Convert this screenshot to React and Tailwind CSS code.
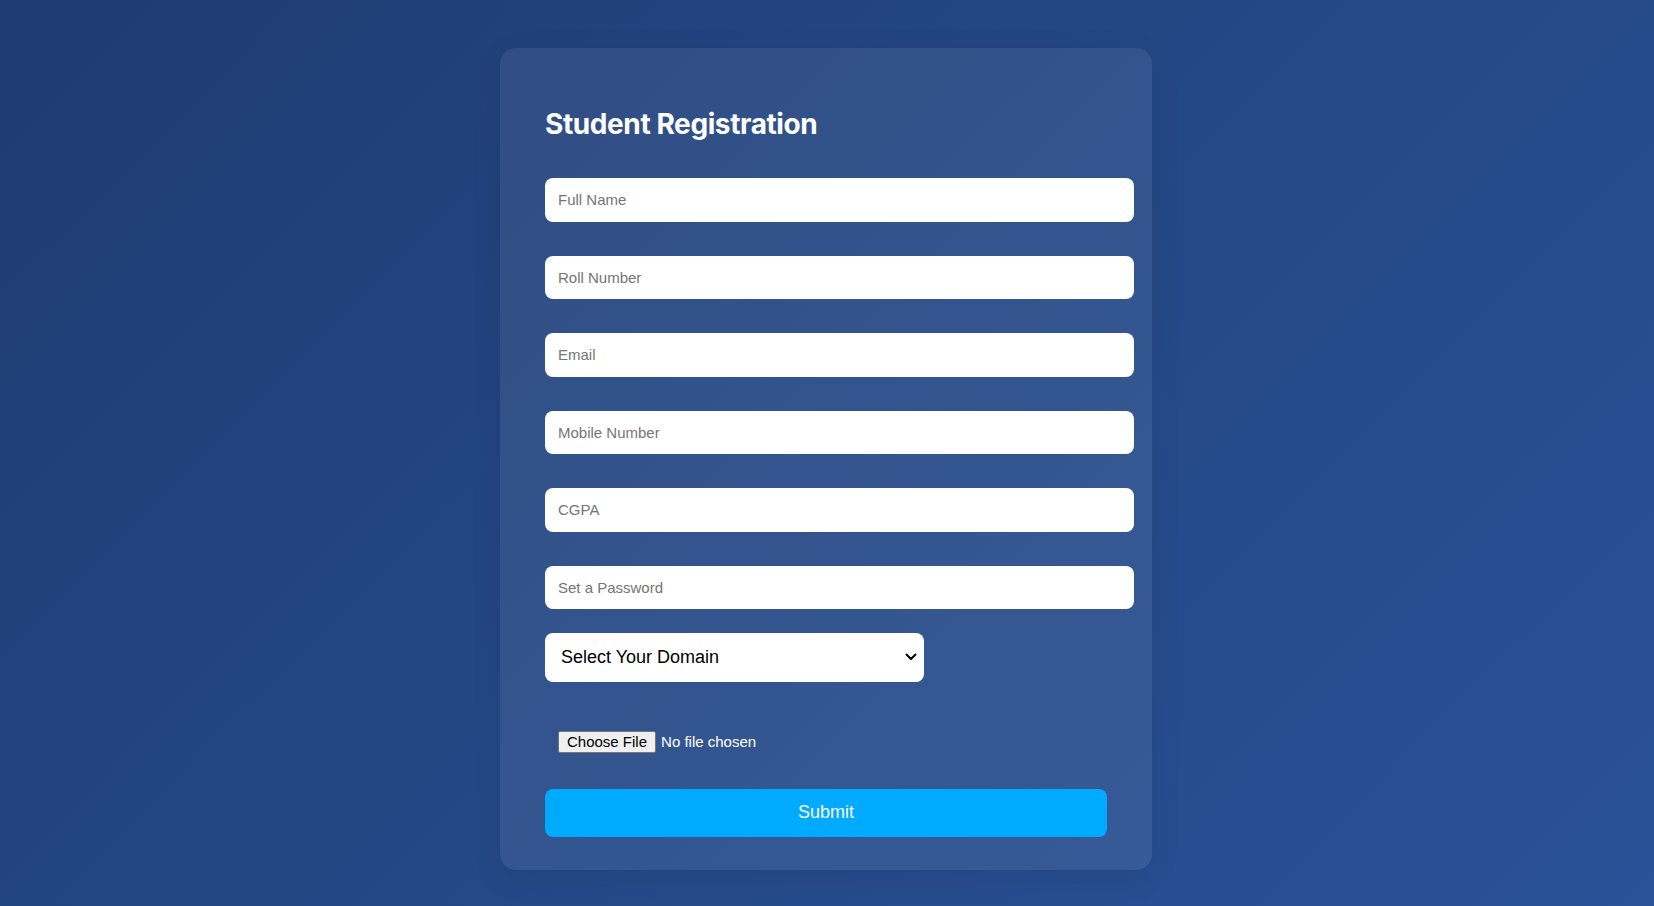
import React from "react";

export default function App() {
  const fields = ["Full Name", "Roll Number", "Email", "Mobile Number", "CGPA", "Set a Password"];
  return (
    <div
      className="min-h-screen w-full flex justify-center pt-[48px] pb-[36px]"
      style={{ background: "linear-gradient(135deg, #1e3c72, #2a5298)" }}
    >
      <div className="w-[652px] h-[822px] mr-[2px] rounded-[16px] bg-white/[0.07] shadow-[0_8px_32px_rgba(0,0,0,0.08)] px-[45px] pt-[56px] pb-[34px] font-['Liberation_Sans',Arial,sans-serif]">
        <h2 className="font-['Inter',sans-serif] font-bold text-[28px] leading-[40px] tracking-[-0.4px] text-white h-[40px]">
          Student Registration
        </h2>
        <div className="mt-[34px] flex flex-col">
          {fields.map((f, i) => (
            <input
              key={f}
              type={f === "Set a Password" ? "password" : "text"}
              placeholder={f}
              className={`w-[589px] h-[43.5px] rounded-lg bg-white px-[13px] text-[15px] text-black placeholder:text-[#757575] outline-none ${i < 5 ? "mb-[34px]" : "mb-[23.5px]"}`}
            />
          ))}
          <div className="relative w-[379px] h-[49px]">
            <select className="appearance-none w-full h-full rounded-lg bg-white pl-[16px] text-[18px] text-black outline-none">
              <option>Select Your Domain</option>
            </select>
            <svg
              className="absolute right-[7px] top-1/2 -translate-y-1/2 pointer-events-none"
              width="12"
              height="8"
              viewBox="0 0 12 8"
              fill="none"
            >
              <path d="M1.5 1.5 L6 6 L10.5 1.5" stroke="#000" strokeWidth="2" strokeLinecap="round" strokeLinejoin="round" />
            </svg>
          </div>
          <input
            type="file"
            className="mt-[36px] w-[588px] h-[48px] px-[13px] py-[13px] text-[15px] leading-[18px] text-white bg-transparent font-['Liberation_Sans',Arial,sans-serif] file:bg-[#efefef] file:text-black file:border file:border-solid file:border-[#767676] file:rounded-[2px] file:px-[8px] file:py-[1px] file:mr-[5px] file:h-[22px] file:font-['Liberation_Sans',Arial,sans-serif] file:text-[15px]"
          />
          <button className="mt-[23px] w-[562px] h-[48px] rounded-lg bg-[#00aaff] text-white text-[18px]">
            Submit
          </button>
        </div>
      </div>
    </div>
  );
}
